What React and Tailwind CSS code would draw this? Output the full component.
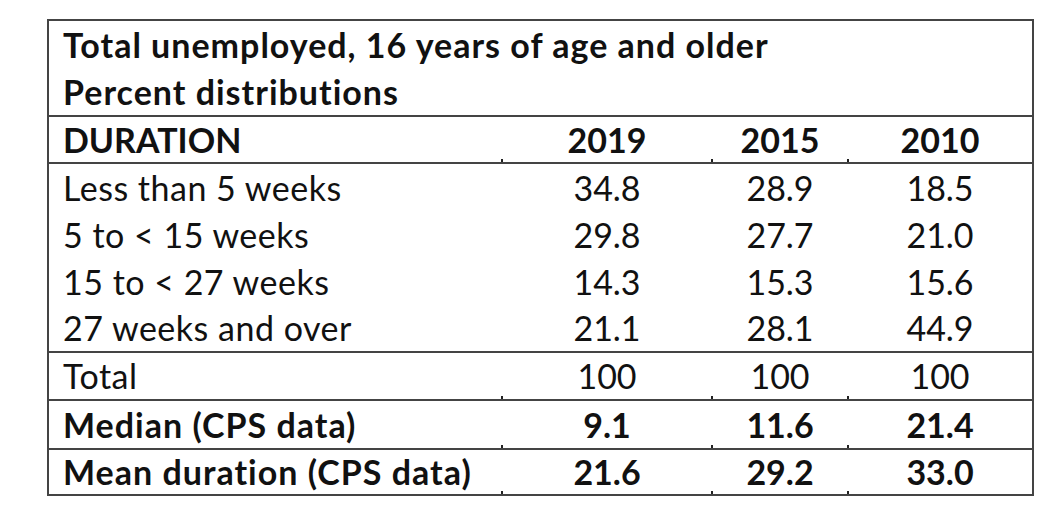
import React from "react";

const rows = [
    { label: "Less than 5 weeks", values: ["34.8", "28.9", "18.5"], h: "h-[47px]" },
    { label: "5 to < 15 weeks", values: ["29.8", "27.7", "21.0"], h: "h-[47px]" },
    { label: "15 to < 27 weeks", values: ["14.3", "15.3", "15.6"], h: "h-[47px]" },
    { label: "27 weeks and over", values: ["21.1", "28.1", "44.9"], h: "h-[48px]", line: true },
    { label: "Total", values: ["100", "100", "100"], h: "h-[48px]", line: true, ticks: true },
    { label: "Median (CPS data)", values: ["9.1", "11.6", "21.4"], h: "h-[49px]", line: true, ticks: true, bold: true },
    { label: "Mean duration (CPS data)", values: ["21.6", "29.2", "33.0"], h: "h-[44px]", ticks: true, bold: true },
];

function Tick() {
    return <span className="absolute left-[-1px] bottom-0 w-[2px] h-[3px] bg-[#222]" />;
}

function Row({ label, values, h, line, ticks, bold }) {
    return (
        <div
            className={`grid grid-cols-[453px_210px_136px_184px] ${h} ${
                line ? "border-b-2 border-[#444]" : ""
            } ${bold ? "font-bold" : ""}`}
        >
            <div className={`flex items-center pl-[14px] ${bold ? "tracking-[1px]" : "tracking-[0.5px]"}`}>
                {label}
            </div>
            {values.map((v, i) => (
                <div key={i} className="relative flex items-center justify-center">
                    {ticks && <Tick />}
                    {v}
                </div>
            ))}
        </div>
    );
}

export default function App() {
    return (
        <div className="w-[1060px] h-[516px] bg-white pt-[19px] pl-[47px] text-[#111] font-['Lato',sans-serif] text-[34px] leading-[38px] [font-variant-ligatures:none]">
            <div className="w-[987px] border-2 border-[#444]">
                <div className="font-bold leading-[47px] pl-[14px] tracking-[1px] border-b-2 border-[#444]">
                    <div>Total unemployed, 16 years of age and older</div>
                    <div>Percent distributions</div>
                </div>
                <div className="grid grid-cols-[453px_210px_136px_184px] h-[47px] font-bold border-b-2 border-[#444]">
                    <div className="flex items-center pl-[14px]">DURATION</div>
                    {["2019", "2015", "2010"].map((y) => (
                        <div key={y} className="relative flex items-center justify-center">
                            <Tick />
                            {y}
                        </div>
                    ))}
                </div>
                {rows.map((r) => (
                    <Row key={r.label} {...r} />
                ))}
            </div>
        </div>
    );
}
